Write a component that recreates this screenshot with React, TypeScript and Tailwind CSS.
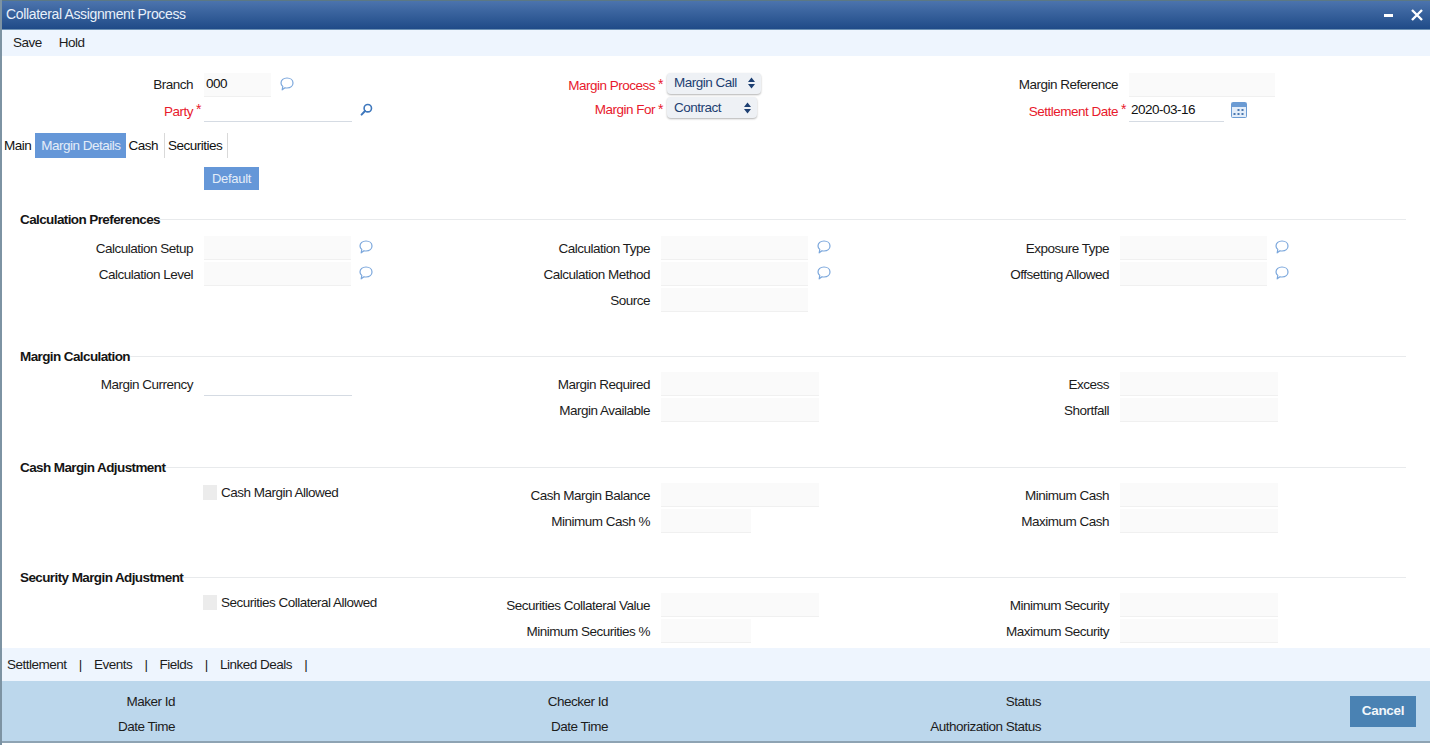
const font = "font-['Liberation_Sans',Arial,sans-serif]"

function Bubble() {
  return (
    <svg width="14" height="14" viewBox="0 0 14 14" fill="none" className="text-[#7ba7dc]">
      <path
        d="M7 1C10.5 1 13 3 13 6 13 9 10.5 11 7 11 6.2 11 5.6 10.900 5 10.700L2.200 12.800 2.800 9.400C1.600 8.500 1 7.300 1 6 1 3 3.500 1 7 1Z"
        stroke="currentColor"
        strokeWidth="1.2"
        strokeLinejoin="round"
      />
    </svg>
  )
}

function SearchIcon() {
  return (
    <svg width="13" height="13" viewBox="0 0 13 13" fill="none" className="text-[#3f78bd]">
      <circle cx="7.8" cy="5.2" r="3.7" stroke="currentColor" strokeWidth="1.6" />
      <path d="M5 8 1.6 11.6" stroke="currentColor" strokeWidth="2" strokeLinecap="round" />
    </svg>
  )
}

function CalendarIcon() {
  return (
    <svg width="16" height="16" viewBox="0 0 16 16">
      <rect x="0.5" y="0.500" width="15" height="15" rx="1" fill="#e3edf9" stroke="#6b9bd3" />
      <rect x="1" y="1" width="14" height="4" fill="#6b9bd3" />
      <g fill="#4a78b0">
        <rect x="6.500" y="7" width="2" height="2" />
        <rect x="10.500" y="7" width="2" height="2" />
        <rect x="2.500" y="11" width="2" height="2" />
        <rect x="6.500" y="11" width="2" height="2" />
        <rect x="10.500" y="11" width="2" height="2" />
      </g>
    </svg>
  )
}

function Field({ width, value, plain }: { width: string; value?: string; plain?: boolean }) {
  return (
    <div
      className={`${width} h-[24px] flex items-center px-[2px] text-[13.5px] tracking-[-0.5px] text-[#111] border-b ${
        plain ? "pt-[2px] bg-white border-[#d5dbe3]" : "bg-[#fafafa] border-[#f0f0f0]"
      }`}
    >
      {value}
    </div>
  )
}

function Cell({ label, children }: { label?: string; children?: React.ReactNode }) {
  return (
    <div className="flex items-center h-[26px]">
      <div className="w-[191px] pt-[2px] text-right text-[13.5px] tracking-[-0.5px] text-[#1c1c1c] whitespace-nowrap">{label}</div>
      <div className="w-[11px]" />
      {children}
    </div>
  )
}

function Check({ label }: { label: string }) {
  return (
    <div className="flex items-center h-[26px] -mt-[3px]">
      <div className="w-[201px]" />
      <div className="w-[14px] h-[15px] bg-[#ececec]" />
      <span className="ml-[4px] pt-[2px] text-[13.5px] tracking-[-0.5px] text-[#1c1c1c] whitespace-nowrap">{label}</span>
    </div>
  )
}

function Section({ title, height, children }: { title: string; height: string; children: React.ReactNode }) {
  return (
    <section className={height}>
      <div className="flex items-center h-[16px] pl-[18px] mr-[24px]">
        <h3 className="pt-[2px] text-[13.5px] tracking-[-0.6px] font-bold text-[#151515] whitespace-nowrap">{title}</h3>
        <div className="flex-1 h-px bg-[#e8eaec]" />
      </div>
      {children}
    </section>
  )
}

function Columns({ children }: { children: React.ReactNode }) {
  return <div className="grid grid-cols-[457px_459px_1fr]">{children}</div>
}

function Req({ label, labelW, starW, children }: { label: string; labelW: string; starW: string; children: React.ReactNode }) {
  return (
    <div className="flex items-center h-[25px]">
      <div className={`${labelW} text-right text-[13.5px] tracking-[-0.5px] text-[#e8192c] whitespace-nowrap`}>{label}</div>
      <div className={`${starW} text-[14px] text-[#e8192c] pl-[3px]`}>*</div>
      {children}
    </div>
  )
}

function SelectBox({ value, width }: { value: string; width: string }) {
  return (
    <div className={`${width} h-[21px] flex items-center justify-between pl-[7px] pr-[6px] rounded-[4px] bg-[#eef1f5] shadow-[0_1px_2px_rgba(0,0,0,0.3)] text-[13.5px] tracking-[-0.5px] text-[#1d3f72]`}>
      <span className="pt-[1px]">{value}</span>
      <svg width="7" height="12" viewBox="0 0 7 12" fill="#1d3f72">
        <path d="M3.5 0.5 7 5H0zM3.5 11.5 0 7h7z" />
      </svg>
    </div>
  )
}

export default function App() {
  return (
    <div className={`${font} w-[1430px] h-[745px] bg-white flex flex-col border-l-2 border-[#7d93a3] pb-[2px] overflow-hidden`}>
      <div className="h-[30px] shrink-0 flex items-center justify-between pl-[4px] pr-[7px] bg-gradient-to-b from-[#4c74ad] to-[#1f4b88] border-t border-[#5c7884] border-b border-b-[#6f93b5]">
        <span className="text-[14px] tracking-[-0.35px] text-[#e8f0fa] pb-[2px]">Collateral Assignment Process</span>
        <div className="flex items-center gap-[18px] text-white">
          <div className="w-[9px] h-[3px] bg-white" />
          <svg width="12" height="12" viewBox="0 0 12 12" stroke="white" strokeWidth="2.4">
            <path d="M1 1 11 11M11 1 1 11" />
          </svg>
        </div>
      </div>

      <div className="h-[26px] shrink-0 flex items-center gap-[17px] pl-[11px] bg-[#eef5fe] text-[13.5px] tracking-[-0.5px] text-[#1c1c1c]">
        <span>Save</span>
        <span>Hold</span>
      </div>

      <main className="flex-1 flex flex-col min-h-0">
        <div className="pt-[16px]">
          <Columns>
            <div>
              <div className="flex items-center h-[25px]">
                <div className="w-[191px] pt-[2px] text-right text-[13.5px] tracking-[-0.5px] text-[#1c1c1c]">Branch</div>
                <div className="w-[11px]" />
                <Field width="w-[67px]" value="000" />
                <div className="ml-[9px] mb-[1px]"><Bubble /></div>
              </div>
              <Req label="Party" labelW="w-[191px] pt-[5px]" starW="w-[11px]">
                <Field width="w-[148px]" plain />
                <div className="ml-[8px]"><SearchIcon /></div>
              </Req>
            </div>
            <div>
              <Req label="Margin Process" labelW="w-[196px] pt-[4px]" starW="w-[12px]">
                <div className="-mt-[3px]"><SelectBox value="Margin Call" width="w-[94px]" /></div>
              </Req>
              <Req label="Margin For" labelW="w-[196px] pt-[2px]" starW="w-[12px]">
                <div className="-mt-[4px]"><SelectBox value="Contract" width="w-[90px]" /></div>
              </Req>
            </div>
            <div>
              <div className="flex items-center h-[25px]">
                <div className="w-[200px] pt-[2px] text-right text-[13.5px] tracking-[-0.5px] text-[#1c1c1c]">Margin Reference</div>
                <div className="w-[11px]" />
                <Field width="w-[146px]" />
              </div>
              <Req label="Settlement Date" labelW="w-[200px] pt-[5px]" starW="w-[11px]">
                <Field width="w-[95px]" value="2020-03-16" plain />
                <div className="ml-[7px]"><CalendarIcon /></div>
              </Req>
            </div>
          </Columns>
        </div>

        <nav className="flex items-center h-[25px] mt-[11px] pl-[2px] text-[13.5px] tracking-[-0.5px] text-[#111]">
          <span className="pr-[4px] pt-[2px]">Main</span>
          <span className="h-full flex items-center pl-[6px] pr-[5px] pt-[2px] bg-[#6597d8] text-[#e4edf8]">Margin Details</span>
          <span className="h-full flex items-center pl-[3px] pr-[6px] pt-[2px] border-r border-[#d9d9d9]">Cash</span>
          <span className="h-full flex items-center pl-[3px] pr-[5px] pt-[2px] border-r border-[#d9d9d9]">Securities</span>
        </nav>

        <div className="pl-[202px] mt-[8px] h-[23px]">
          <button className="w-[55px] h-[23px] bg-[#6597d8] text-[13px] tracking-[-0.3px] text-[#e4edf8]">Default</button>
        </div>

        <div className="mt-[22px]">
          <Section title="Calculation Preferences" height="h-[137px]">
            <div className="mt-[8px]">
              <Columns>
                <div>
                  <Cell label="Calculation Setup"><Field width="w-[147px]" /><div className="ml-[8px] mb-[2px]"><Bubble /></div></Cell>
                  <Cell label="Calculation Level"><Field width="w-[147px]" /><div className="ml-[8px] mb-[2px]"><Bubble /></div></Cell>
                </div>
                <div>
                  <Cell label="Calculation Type"><Field width="w-[147px]" /><div className="ml-[9px] mb-[2px]"><Bubble /></div></Cell>
                  <Cell label="Calculation Method"><Field width="w-[147px]" /><div className="ml-[9px] mb-[2px]"><Bubble /></div></Cell>
                  <Cell label="Source"><Field width="w-[147px]" /></Cell>
                </div>
                <div>
                  <Cell label="Exposure Type"><Field width="w-[147px]" /><div className="ml-[8px] mb-[2px]"><Bubble /></div></Cell>
                  <Cell label="Offsetting Allowed"><Field width="w-[147px]" /><div className="ml-[8px] mb-[2px]"><Bubble /></div></Cell>
                </div>
              </Columns>
            </div>
          </Section>

          <Section title="Margin Calculation" height="h-[111px]">
            <div className="mt-[7px]">
              <Columns>
                <div>
                  <Cell label="Margin Currency"><Field width="w-[148px]" plain /></Cell>
                </div>
                <div>
                  <Cell label="Margin Required"><Field width="w-[158px]" /></Cell>
                  <Cell label="Margin Available"><Field width="w-[158px]" /></Cell>
                </div>
                <div>
                  <Cell label="Excess"><Field width="w-[158px]" /></Cell>
                  <Cell label="Shortfall"><Field width="w-[158px]" /></Cell>
                </div>
              </Columns>
            </div>
          </Section>

          <Section title="Cash Margin Adjustment" height="h-[110px]">
            <div className="mt-[7px]">
              <Columns>
                <div>
                  <Check label="Cash Margin Allowed" />
                </div>
                <div>
                  <Cell label="Cash Margin Balance"><Field width="w-[158px]" /></Cell>
                  <Cell label="Minimum Cash %"><Field width="w-[90px]" /></Cell>
                </div>
                <div>
                  <Cell label="Minimum Cash"><Field width="w-[158px]" /></Cell>
                  <Cell label="Maximum Cash"><Field width="w-[158px]" /></Cell>
                </div>
              </Columns>
            </div>
          </Section>

          <Section title="Security Margin Adjustment" height="h-[64px]">
            <div className="mt-[7px]">
              <Columns>
                <div>
                  <Check label="Securities Collateral Allowed" />
                </div>
                <div>
                  <Cell label="Securities Collateral Value"><Field width="w-[158px]" /></Cell>
                  <Cell label="Minimum Securities %"><Field width="w-[90px]" /></Cell>
                </div>
                <div>
                  <Cell label="Minimum Security"><Field width="w-[158px]" /></Cell>
                  <Cell label="Maximum Security"><Field width="w-[158px]" /></Cell>
                </div>
              </Columns>
            </div>
          </Section>
        </div>
      </main>

      <div className="h-[33px] shrink-0 flex items-center pl-[5px] pt-[2px] bg-[#eef5fe] text-[13.5px] tracking-[-0.5px] text-[#1c1c1c]">
        <span>Settlement</span>
        <span className="mx-[12.2px]">|</span>
        <span>Events</span>
        <span className="mx-[12.2px]">|</span>
        <span>Fields</span>
        <span className="mx-[12.2px]">|</span>
        <span>Linked Deals</span>
        <span className="mx-[12.2px]">|</span>
      </div>

      <footer className="h-[62px] shrink-0 flex items-center justify-between bg-[#bcd7ec] border-b-2 border-[#8ea3b3] pr-[14px] text-[13.5px] tracking-[-0.5px] text-[#1c1c1c]">
        <div className="grid grid-cols-[173px_433px_433px] grid-rows-[25px_25px] items-center text-right mt-[8px]">
          <span>Maker Id</span>
          <span>Checker Id</span>
          <span>Status</span>
          <span>Date Time</span>
          <span>Date Time</span>
          <span>Authorization Status</span>
        </div>
        <button className="w-[66px] h-[31px] bg-[#4a82b3] text-[13.5px] font-bold tracking-[-0.3px] text-[#f2f7fb]">Cancel</button>
      </footer>
    </div>
  )
}
